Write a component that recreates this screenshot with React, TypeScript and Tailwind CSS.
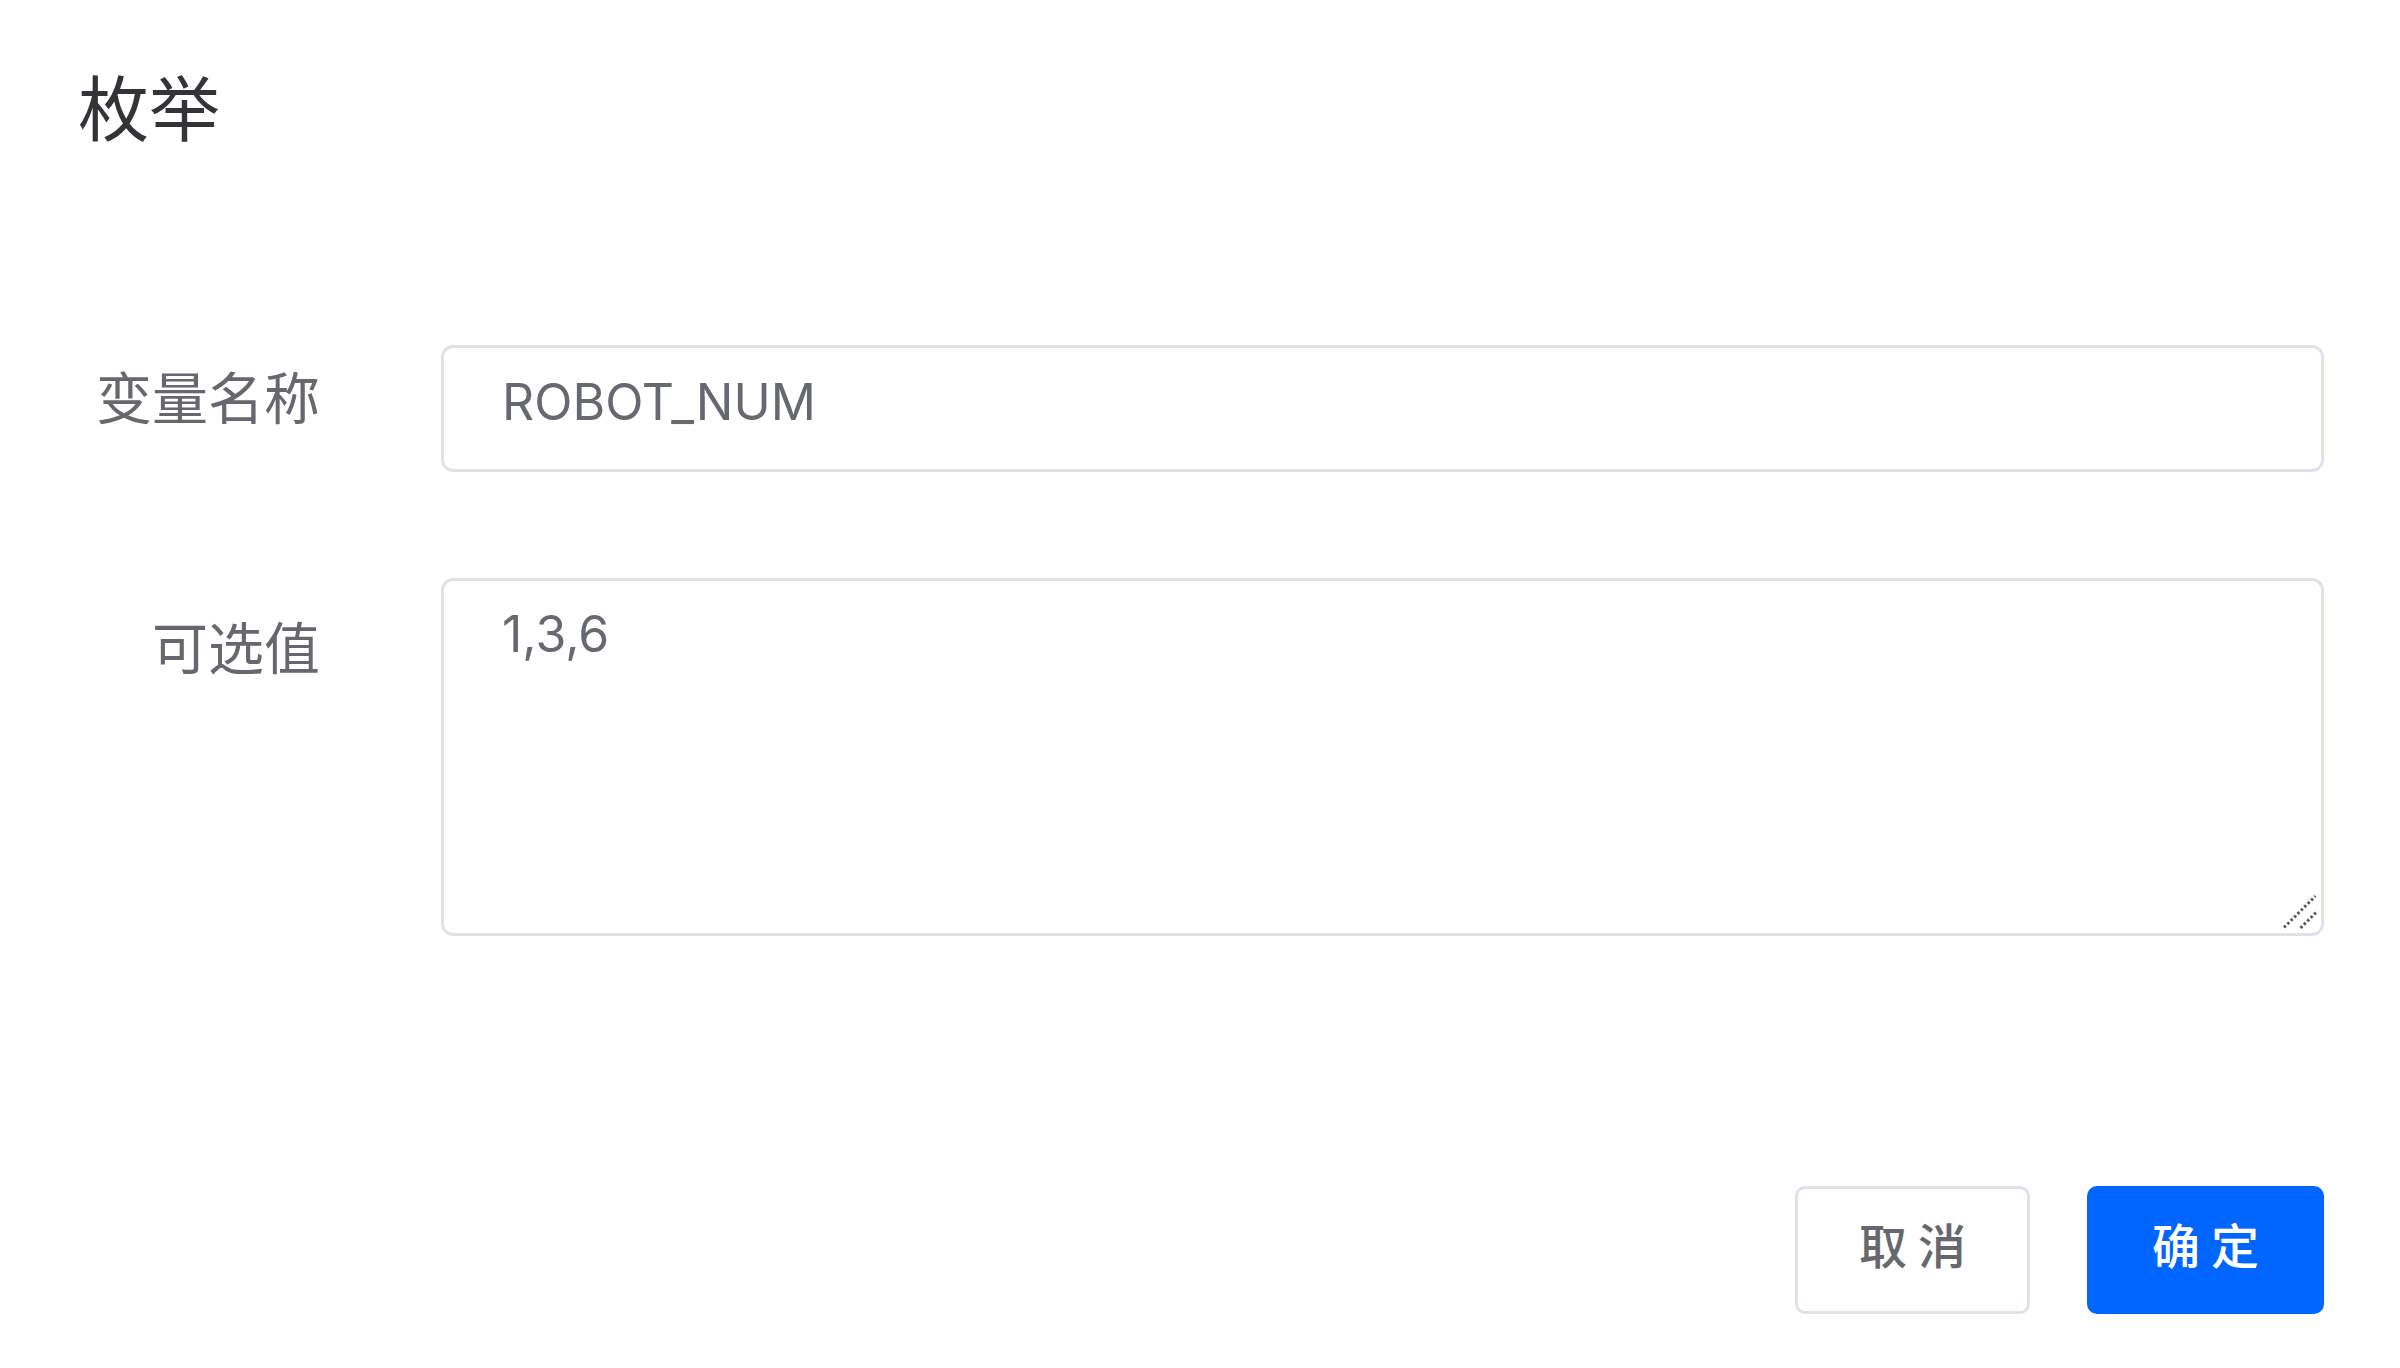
import { useState } from 'react'

const cjk = '"Noto Sans CJK SC", "Noto Sans", sans-serif'
const latin = 'Inter, "Noto Sans CJK SC", sans-serif'

function ResizeGrip() {
  return (
    <svg
      className="pointer-events-none absolute right-[6px] bottom-[6px] w-[36px] h-[36px]"
      viewBox="0 0 36 36"
      fill="none"
      stroke="#5f5f5f"
      strokeWidth={3}
      strokeDasharray="2.6 2.2"
    >
      <path d="M2 33.5L33.5 2" />
      <path d="M18.5 34L34 18.5" />
    </svg>
  )
}

export default function App() {
  const [name, setName] = useState('ROBOT_NUM')
  const [values, setValues] = useState('1,3,6')

  return (
    <div className="min-h-screen bg-white pl-[78px] pr-[76px] pt-[69px]">
      <h1 className="text-[71px] leading-none text-[#333438]" style={{ fontFamily: cjk }}>
        枚举
      </h1>

      <div className="mt-[205px] flex flex-col gap-[106px]">
        <div className="grid grid-cols-[363px_1fr]">
          <label
            className="pr-[121px] pt-[22px] text-right text-[56px] leading-none text-[#66686e]"
            style={{ fontFamily: cjk }}
          >
            变量名称
          </label>
          <input
            value={name}
            onChange={(e) => setName(e.target.value)}
            className="h-[127px] w-full rounded-[12px] border-[3px] border-[#dfe2e9] bg-white pl-[58px] pr-6 pb-[14px] text-[50px] text-[#66696f] outline-none"
            style={{ fontFamily: latin }}
          />
        </div>

        <div className="grid grid-cols-[363px_1fr]">
          <label
            className="pr-[121px] pt-[39px] text-right text-[56px] leading-none text-[#66686e]"
            style={{ fontFamily: cjk }}
          >
            可选值
          </label>
          <div className="relative">
            <textarea
              value={values}
              onChange={(e) => setValues(e.target.value)}
              className="block h-[358px] w-full resize-none rounded-[12px] border-[3px] border-[#dfe2e9] bg-white pl-[58px] pr-6 pt-[16px] text-[50px] leading-[1.5] text-[#66696f] outline-none"
              style={{ fontFamily: latin }}
            />
            <ResizeGrip />
          </div>
        </div>
      </div>

      <div className="mt-[250px] flex justify-end gap-[57px]">
        <button
          type="button"
          className="h-[128px] w-[235px] rounded-[10px] border-[3px] border-[#dfe2e9] bg-white pb-[14px] text-[48px] font-medium text-[#66686e]"
          style={{ fontFamily: cjk }}
        >
          取 消
        </button>
        <button
          type="button"
          className="h-[128px] w-[237px] rounded-[10px] bg-[#0066ff] pb-[14px] text-[48px] font-medium text-white"
          style={{ fontFamily: cjk }}
        >
          确 定
        </button>
      </div>
    </div>
  )
}
